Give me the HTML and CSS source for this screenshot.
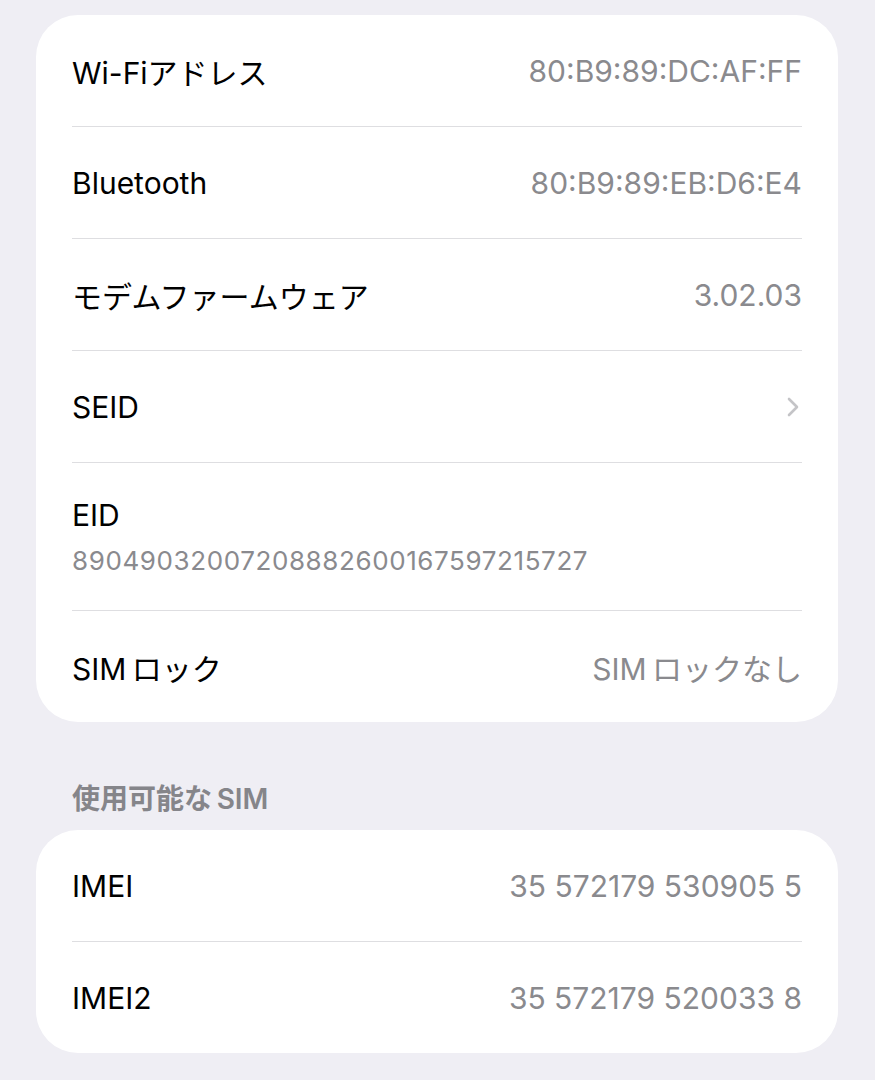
FILE: index.html
```html
<!DOCTYPE html>
<html lang="ja">
<head>
  <meta charset="UTF-8">
  <meta name="viewport" content="width=device-width, initial-scale=1.0">
  <title>情報</title>
  <link rel="stylesheet" href="styles.css">
</head>
<body>
  <div class="page">
    <div class="card">
      <div class="row">
        <span class="label">Wi-Fiアドレス</span>
        <span class="value">80:B9:89:DC:AF:FF</span>
      </div>
      <div class="row">
        <span class="label">Bluetooth</span>
        <span class="value">80:B9:89:EB:D6:E4</span>
      </div>
      <div class="row">
        <span class="label">モデムファームウェア</span>
        <span class="value">3.02.03</span>
      </div>
      <div class="row">
        <span class="label">SEID</span>
        <svg class="chevron" width="14" height="22" viewBox="0 0 14 22">
          <path d="M3 3 L11 11 L3 19" fill="none" stroke="#c4c4c7" stroke-width="2.6" stroke-linecap="round" stroke-linejoin="round"/>
        </svg>
      </div>
      <div class="row row-stack">
        <span class="label">EID</span>
        <span class="sub">89049032007208882600167597215727</span>
      </div>
      <div class="row">
        <span class="label">SIM&#8201;ロック</span>
        <span class="value">SIM&#8201;ロックなし</span>
      </div>
    </div>

    <div class="section-title">使用可能な&#8201;SIM</div>

    <div class="card">
      <div class="row">
        <span class="label">IMEI</span>
        <span class="value">35 572179 530905 5</span>
      </div>
      <div class="row">
        <span class="label">IMEI2</span>
        <span class="value">35 572179 520033 8</span>
      </div>
    </div>
  </div>
</body>
</html>
```

FILE: styles.css
```css
body {
  margin: 0;
  background-color: #efeef4;
  font-family: Inter, "Noto Sans CJK JP", sans-serif;
  color: #000;
}
.page {
  padding: 15px 37px 0 36px;
}
.card {
  background-color: #fff;
  border-radius: 42px;
  padding: 0 36px;
}
.row {
  display: flex;
  align-items: center;
  justify-content: space-between;
  min-height: 111px;
  border-bottom: 1px solid #dedee1;
}
.row:last-child {
  border-bottom: none;
}
.row-stack {
  flex-direction: column;
  align-items: flex-start;
  justify-content: flex-start;
  min-height: 147px;
}
.row-stack .label {
  margin-top: 34px;
  line-height: 36px;
}
.label {
  font-size: 30px;
}
.value {
  font-size: 30px;
  color: #8a8a8e;
}
.sub {
  font-size: 26px;
  letter-spacing: 0.6px;
  line-height: 32px;
  color: #8a8a8e;
  margin-top: 12px;
}
.chevron {
  margin-right: 2px;
}
.section-title {
  font-size: 28px;
  font-weight: 600;
  line-height: 36px;
  color: #85858a;
  padding: 59px 36px 13px;
}
```
